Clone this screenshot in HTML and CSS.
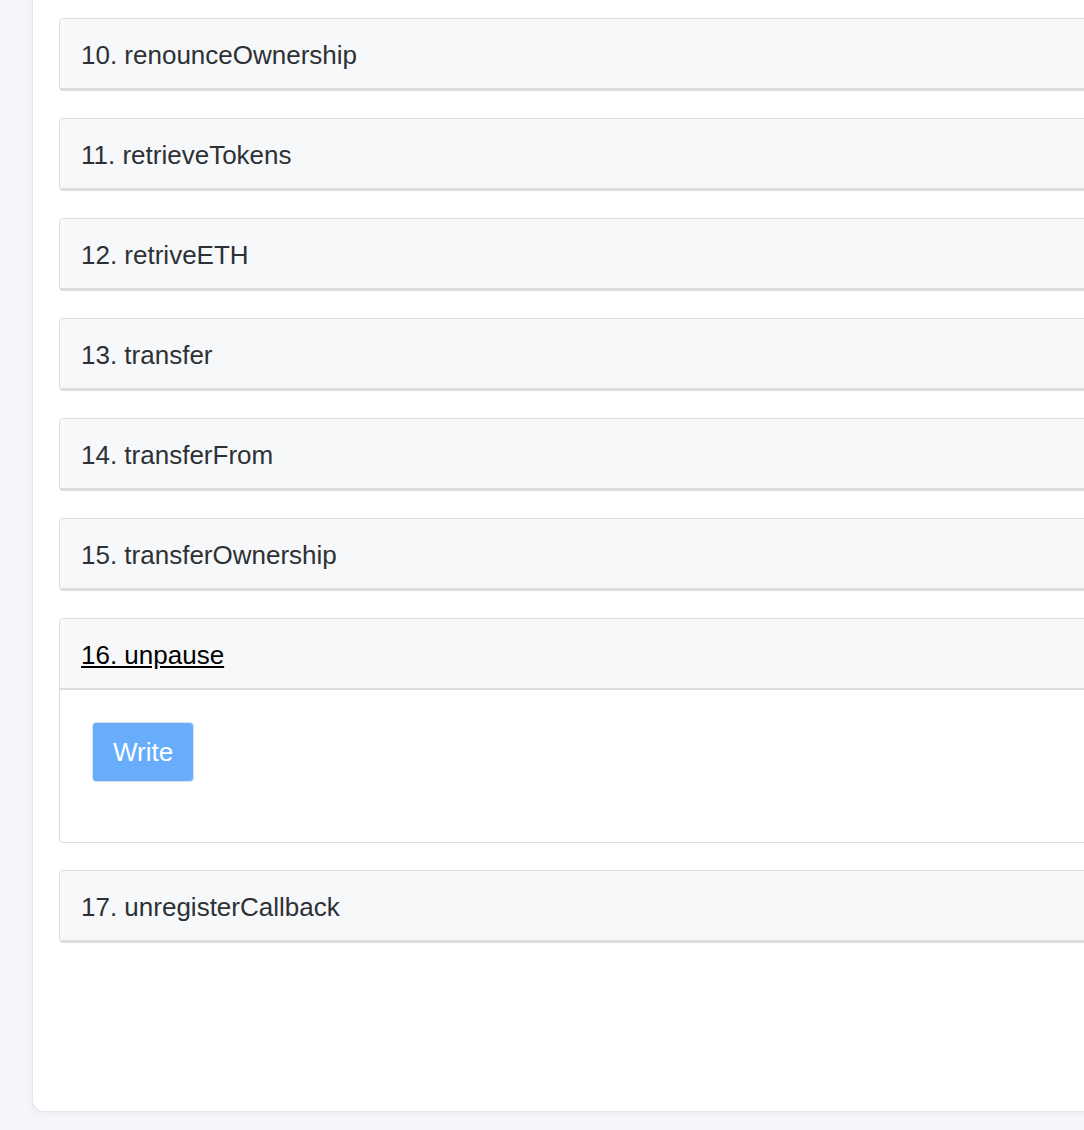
FILE: index.html
```html
<!DOCTYPE html>
<html>
<head>
<meta charset="utf-8">
<link rel="stylesheet" href="styles.css">
</head>
<body>
<div class="page">
  <div class="panel">
    <div class="item"><div class="item-head">10. renounceOwnership</div></div>
    <div class="item"><div class="item-head">11. retrieveTokens</div></div>
    <div class="item"><div class="item-head">12. retriveETH</div></div>
    <div class="item"><div class="item-head">13. transfer</div></div>
    <div class="item"><div class="item-head">14. transferFrom</div></div>
    <div class="item"><div class="item-head">15. transferOwnership</div></div>
    <div class="item open">
      <div class="item-head"><a class="item-link">16. unpause</a></div>
      <div class="item-body">
        <button class="btn-write" disabled>Write</button>
      </div>
    </div>
    <div class="item"><div class="item-head">17. unregisterCallback</div></div>
  </div>
</div>
</body>
</html>
```
FILE: styles.css
```css
html, body {
  margin: 0;
  padding: 0;
}
body {
  background: #f5f6f9;
  overflow: hidden;
  font-family: "Liberation Sans", Arial, Helvetica, sans-serif;
}
.page {
  padding-left: 32px;
  padding-bottom: 20px;
}
.panel {
  width: 1200px;
  background: #fff;
  border: 1px solid #e3e4ee;
  border-top: none;
  border-radius: 0 0 0 12px;
  padding: 18px 0 168px 26px;
  box-shadow: 0 2px 6px rgba(120, 125, 160, 0.08);
}
.item {
  border: 1px solid #dcdcdc;
  border-radius: 4px;
  margin-bottom: 27px;
  background: #fff;
}
.item:last-child {
  margin-bottom: 0;
}
.item-head {
  background: #f7f8fa;
  border-bottom: 2px solid #dcdcdc;
  padding: 18px 21px 15px;
  font-size: 26px;
  line-height: 36px;
  color: #2d3135;
  border-radius: 3px 3px 0 0;
}
.item-link {
  color: #000;
  text-decoration: underline;
  text-underline-offset: 2px;
}
.item-body {
  padding: 32px 32px 60px;
}
.btn-write {
  font-family: "Liberation Sans", Arial, Helvetica, sans-serif;
  font-size: 26px;
  line-height: 36px;
  padding: 11px 20px;
  color: #fff;
  background: #67adfb;
  border: 1px solid #dde3ea;
  border-radius: 4px;
  display: block;
}
```
